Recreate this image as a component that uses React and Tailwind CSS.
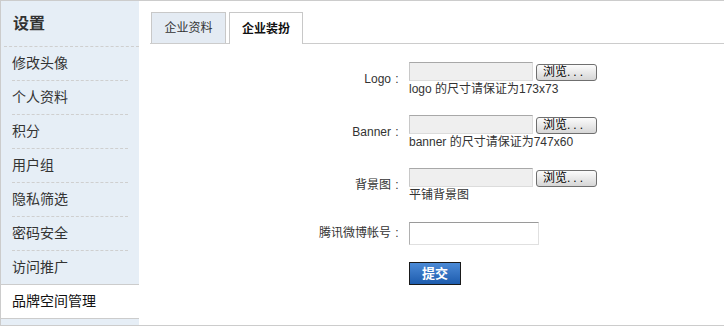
import React from "react";

const font = { fontFamily: '"Liberation Sans", "Noto Sans CJK SC", sans-serif' };

function FileField({ help }) {
  return (
    <div className="flex flex-col">
      <div className="flex items-center">
        <div className="w-[124px] h-[19px] bg-[#efefef] border border-[#dcdcdc] border-t-[#a8a8a8] border-l-[#c8c8c8]" />
        <button className="ml-[3px] w-[61px] h-[17px] mt-[1px] rounded-[3px] border border-[#6f6f6f] bg-gradient-to-b from-[#fcfcfc] to-[#d6d6d6] text-[12px] leading-[15px] text-black text-left pl-[6px]">
          浏览<span className="tracking-[3px]">...</span>
        </button>
      </div>
      <div className="mt-[1px] text-[12px] leading-[14px] text-[#333]">{help}</div>
    </div>
  );
}

function Row({ label, children, className = "" }) {
  return (
    <div className={"flex items-center " + className}>
      <div className="w-[264px] text-right text-[12px] text-[#333]">
        {label}
        {label ? (
          <span className="inline-block w-[12px] text-center" style={{ fontFamily: '"Liberation Sans", sans-serif' }}>
            :
          </span>
        ) : null}
      </div>
      <div className="ml-[6px]">{children}</div>
    </div>
  );
}

export default function App() {
  const items = ["修改头像", "个人资料", "积分", "用户组", "隐私筛选", "密码安全"];
  return (
    <div style={font} className="w-[724px] h-[326px] flex border-t border-b border-l border-[#cccccc] bg-white">
      <div className="w-[138px] bg-[#e6eef6] flex flex-col">
        <div className="h-[46px] ml-[3px] pl-[9px] flex items-center border-b border-dashed border-[#cfcfcf] text-[16px] font-bold text-[#333]">
          设置
        </div>
        {items.map((t) => (
          <div key={t} className="h-[34px] mx-[11px] flex items-center border-b border-dashed border-[#cfcfcf] text-[14px] text-[#333]">
            {t}
          </div>
        ))}
        <div className="h-[33px] pl-[11px] flex items-center text-[14px] text-[#333]">访问推广</div>
        <div className="h-[35px] pl-[11px] flex items-center bg-white border-y border-[#cccccc] text-[14px] text-[#111]">
          品牌空间管理
        </div>
        <div className="flex-1" />
      </div>
      <div className="flex-1 flex flex-col">
        <div className="mt-[11px] ml-[11px] h-[32px] flex items-end border-b border-[#cccccc]">
          <div className="ml-[1px] w-[75px] h-[31px] flex items-center justify-center bg-[#e4ebf3] border border-b-0 border-[#c8c8c8] text-[12px] text-[#333]">
            企业资料
          </div>
          <div className="ml-[3px] w-[74px] h-[32px] -mb-[1px] flex items-center justify-center bg-white border border-b-0 border-[#c8c8c8] text-[12px] font-bold text-[#111]">
            企业装扮
          </div>
        </div>
        <div className="mt-[18px] flex flex-col">
          <Row label="Logo">
            <FileField help="logo 的尺寸请保证为173x73" />
          </Row>
          <Row label="Banner" className="mt-[19px]">
            <FileField help="banner 的尺寸请保证为747x60" />
          </Row>
          <Row label="背景图" className="mt-[19px]">
            <FileField help="平铺背景图" />
          </Row>
          <Row label="腾讯微博帐号" className="mt-[19px]">
            <input className="w-[130px] h-[23px] bg-white border border-[#e0e0e0] border-t-[#9a9a9a] border-l-[#b0b0b0] outline-none" />
          </Row>
          <Row label="" className="mt-[16px]">
            <button className="w-[52px] h-[23px] border border-[#1a1a1a] bg-gradient-to-b from-[#4b8ad6] to-[#1d5cae] text-white font-bold text-[13px]">
              提交
            </button>
          </Row>
        </div>
      </div>
    </div>
  );
}
